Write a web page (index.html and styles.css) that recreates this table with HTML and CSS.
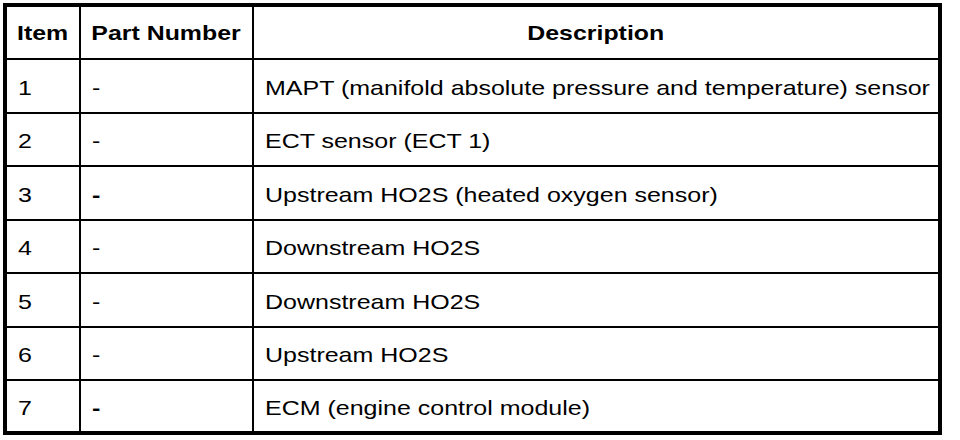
FILE: index.html
```html
<!DOCTYPE html>
<html>
<head>
<meta charset="utf-8">
<link rel="stylesheet" href="styles.css">
</head>
<body>
<div class="parts" role="table">
  <div class="cell head" role="columnheader"><span class="txt">Item</span></div>
  <div class="cell head" role="columnheader"><span class="txt">Part Number</span></div>
  <div class="cell head last" role="columnheader"><span class="txt">Description</span></div>

  <div class="cell"><span class="txt">1</span></div>
  <div class="cell"><span class="txt">-</span></div>
  <div class="cell last"><span class="txt">MAPT (manifold absolute pressure and temperature) sensor</span></div>

  <div class="cell"><span class="txt">2</span></div>
  <div class="cell"><span class="txt">-</span></div>
  <div class="cell last"><span class="txt">ECT sensor (ECT 1)</span></div>

  <div class="cell"><span class="txt">3</span></div>
  <div class="cell bold"><span class="txt">-</span></div>
  <div class="cell last"><span class="txt">Upstream HO2S (heated oxygen sensor)</span></div>

  <div class="cell"><span class="txt">4</span></div>
  <div class="cell"><span class="txt">-</span></div>
  <div class="cell last"><span class="txt">Downstream HO2S</span></div>

  <div class="cell"><span class="txt">5</span></div>
  <div class="cell"><span class="txt">-</span></div>
  <div class="cell last"><span class="txt">Downstream HO2S</span></div>

  <div class="cell"><span class="txt">6</span></div>
  <div class="cell"><span class="txt">-</span></div>
  <div class="cell last"><span class="txt">Upstream HO2S</span></div>

  <div class="cell end"><span class="txt">7</span></div>
  <div class="cell end bold"><span class="txt">-</span></div>
  <div class="cell end last"><span class="txt">ECM (engine control module)</span></div>
</div>
</body>
</html>
```

FILE: styles.css
```css
html, body {
  margin: 0;
  padding: 0;
  background: #ffffff;
}

body {
  padding: 3px 0 0 3px;
  font-family: "Liberation Sans", Arial, Helvetica, sans-serif;
  color: #000000;
}

.parts {
  display: grid;
  grid-template-columns: 74px 173px 684px;
  grid-template-rows: 53px 54px 53px 54px 53px 54px 53px 50px;
  width: max-content;
  border: 4px solid #000000;
}

.cell {
  box-sizing: border-box;
  display: flex;
  align-items: center;
  padding: 3px 0 0 11px;
  border-right: 2px solid #000000;
  border-bottom: 2px solid #000000;
  font-size: 21px;
  white-space: nowrap;
  overflow: visible;
}

.txt {
  display: inline-block;
  transform: scaleX(1.19);
  transform-origin: left center;
}

.cell.last {
  border-right: none;
}

.cell.end {
  border-bottom: none;
}

.cell.head {
  justify-content: center;
  padding: 0;
  font-weight: bold;
}

.cell.head .txt {
  transform: scaleX(1.185);
  transform-origin: center center;
}

.cell.bold {
  font-weight: bold;
}
```
